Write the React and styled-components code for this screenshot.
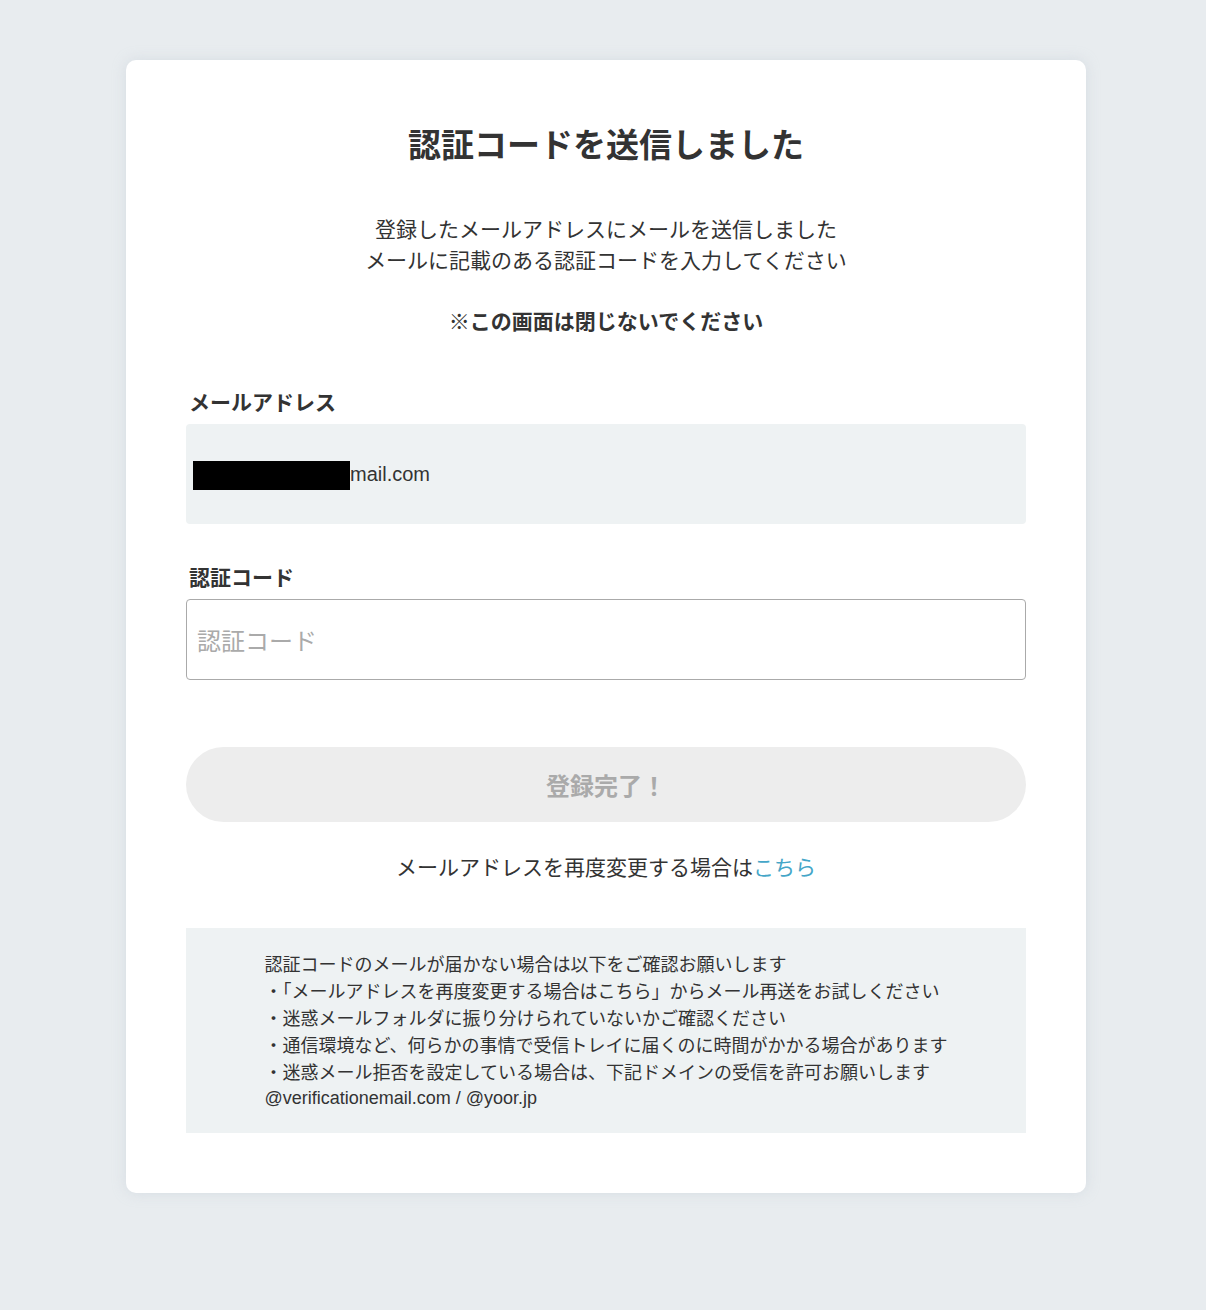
import styled, { createGlobalStyle } from "styled-components";

const GlobalStyle = createGlobalStyle`
  html, body {
    margin: 0;
    background: #e8ecef;
    font-family: "Noto Sans CJK JP", "Noto Sans", sans-serif;
    color: #333;
  }
`;

const Page = styled.div`
  padding: 60px 0 60px 6px;
  display: flex;
  justify-content: center;
  align-items: flex-start;
`;

const Card = styled.div`
  width: 960px;
  box-sizing: border-box;
  padding: 59px 60px 60px;
  background: #fff;
  border-radius: 10px;
  box-shadow: 0 0 14px rgba(180, 192, 204, 0.35);
`;

const Title = styled.h1`
  margin: 0;
  font-size: 33px;
  line-height: 48px;
  font-weight: 700;
  text-align: center;
  color: #333;
`;

const Lead = styled.p`
  margin: 46px 0 0;
  font-size: 21px;
  line-height: 31px;
  text-align: center;
  color: #333;
`;

const Warning = styled.p`
  margin: 30px 0 0;
  font-size: 21px;
  line-height: 31px;
  font-weight: 700;
  text-align: center;
`;

const Field = styled.div`
  margin-top: ${(p) => p.$top}px;
`;

const Label = styled.div`
  font-size: 21px;
  line-height: 30px;
  font-weight: 700;
  padding-left: 3px;
  margin-bottom: 8px;
`;

const ReadOnlyBox = styled.div`
  height: 100px;
  box-sizing: border-box;
  padding: 0 7px;
  display: flex;
  align-items: center;
  background: #eef2f3;
  border-radius: 4px;
  font-family: "Liberation Sans", "Noto Sans CJK JP", sans-serif;
  font-size: 20px;
  color: #333;
`;

const Redacted = styled.span`
  display: inline-block;
  width: 157px;
  height: 29px;
  background: #000;
  margin-top: 3px;
`;

const Input = styled.input`
  display: block;
  width: 100%;
  height: 81px;
  box-sizing: border-box;
  padding: 0 10px;
  border: 1px solid #aaa;
  border-radius: 4px;
  font-family: "Noto Sans CJK JP", sans-serif;
  font-size: 24px;
  color: #333;
  outline: none;

  &::placeholder {
    color: #aaa;
  }
`;

const SubmitButton = styled.button`
  display: block;
  width: 100%;
  height: 75px;
  margin-top: 67px;
  border: none;
  border-radius: 38px;
  background: #ededed;
  color: #aaa;
  font-family: "Noto Sans CJK JP", sans-serif;
  font-size: 24px;
  font-weight: 700;
  cursor: default;
`;

const ChangeLine = styled.p`
  margin: 29px 0 0;
  font-size: 21px;
  line-height: 30px;
  text-align: center;

  a {
    color: #45a6c8;
    text-decoration: none;
  }
`;

const Notice = styled.div`
  margin-top: 47px;
  padding: 22px 0 21px;
  background: #eef2f3;
  text-align: center;
`;

const NoticeText = styled.div`
  display: inline-block;
  text-align: left;
  font-size: 18px;
  line-height: 27px;
  color: #333;
`;

const Domains = styled.div`
  font-family: "Liberation Sans", "Noto Sans CJK JP", sans-serif;
`;

const notes = [
  "認証コードのメールが届かない場合は以下をご確認お願いします",
  "・「メールアドレスを再度変更する場合はこちら」からメール再送をお試しください",
  "・迷惑メールフォルダに振り分けられていないかご確認ください",
  "・通信環境など、何らかの事情で受信トレイに届くのに時間がかかる場合があります",
  "・迷惑メール拒否を設定している場合は、下記ドメインの受信を許可お願いします",
];

export default function App() {
  return (
    <>
      <GlobalStyle />
      <Page>
        <Card>
          <Title>認証コードを送信しました</Title>
          <Lead>
            登録したメールアドレスにメールを送信しました
            <br />
            メールに記載のある認証コードを入力してください
          </Lead>
          <Warning>※この画面は閉じないでください</Warning>

          <Field $top={50}>
            <Label>メールアドレス</Label>
            <ReadOnlyBox>
              <Redacted />
              mail.com
            </ReadOnlyBox>
          </Field>

          <Field $top={37}>
            <Label>認証コード</Label>
            <Input type="text" placeholder="認証コード" />
          </Field>

          <SubmitButton type="button">登録完了！</SubmitButton>

          <ChangeLine>
            メールアドレスを再度変更する場合は<a href="#">こちら</a>
          </ChangeLine>

          <Notice>
            <NoticeText>
              {notes.map((n) => (
                <div key={n}>{n}</div>
              ))}
              <Domains>@verificationemail.com / @yoor.jp</Domains>
            </NoticeText>
          </Notice>
        </Card>
      </Page>
    </>
  );
}
